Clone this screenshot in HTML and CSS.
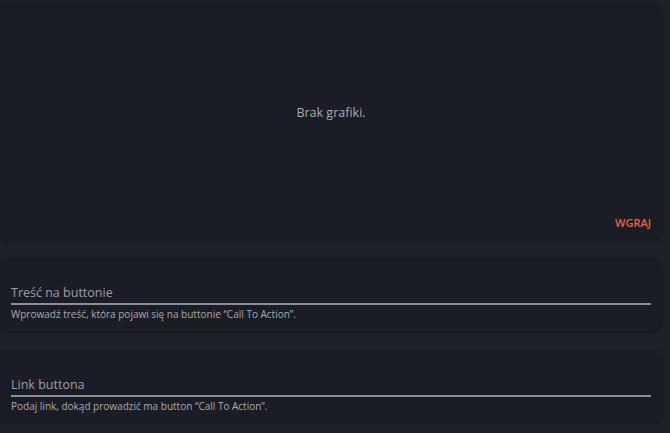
FILE: index.html
```html
<!DOCTYPE html>
<html lang="pl">
<head>
<meta charset="utf-8">
<title>Call To Action</title>
<link rel="stylesheet" href="styles.css">
</head>
<body>
<div class="page">
  <section class="card media">
    <div class="media-empty">Brak grafiki.</div>
    <div class="media-actions"><button class="upload">WGRAJ</button></div>
  </section>
  <section class="card field">
    <div class="label">Treść na buttonie</div>
    <div class="line"></div>
    <div class="helper">Wprowadź treść, która pojawi się na buttonie “Call To Action”.</div>
  </section>
  <section class="card field">
    <div class="label">Link buttona</div>
    <div class="line"></div>
    <div class="helper">Podaj link, dokąd prowadzić ma button “Call To Action”.</div>
  </section>
</div>
</body>
</html>
```

FILE: styles.css
```css
html, body {
  margin: 0;
  padding: 0;
  background: #1e2129;
  font-family: "Open Sans", "Liberation Sans", sans-serif;
  overflow: hidden;
}
.page {
  display: flex;
  flex-direction: column;
  gap: 18px;
  width: 666px;
  margin-left: -4px;
  padding-top: 1px;
}
.card {
  background: #1a1d25;
  border-radius: 10px;
  box-shadow: 0 1px 3px rgba(0, 0, 0, 0.35);
}
.media {
  height: 239px;
  display: flex;
  flex-direction: column;
  box-sizing: border-box;
}
.media-empty {
  flex: 1;
  display: flex;
  align-items: center;
  justify-content: center;
  padding-top: 8px;
  padding-left: 4px;
  color: #a9abb1;
  font-size: 12.5px;
}
.media-actions {
  display: flex;
  justify-content: flex-end;
  padding: 0 11px 10px 0;
}
.upload {
  background: none;
  border: 0;
  padding: 0;
  color: #e8633a;
  font-family: inherit;
  font-size: 11px;
  font-weight: 600;
  line-height: 14px;
}
.field {
  padding: 26px 11px 12px 15px;
}
.label {
  color: #9c9ea4;
  font-size: 12.5px;
  line-height: 17px;
}
.line {
  margin-top: 2px;
  height: 2px;
  background: #8b8e95;
}
.helper {
  margin-top: 3px;
  color: #a8aaaf;
  font-size: 10px;
  line-height: 12px;
}
```
